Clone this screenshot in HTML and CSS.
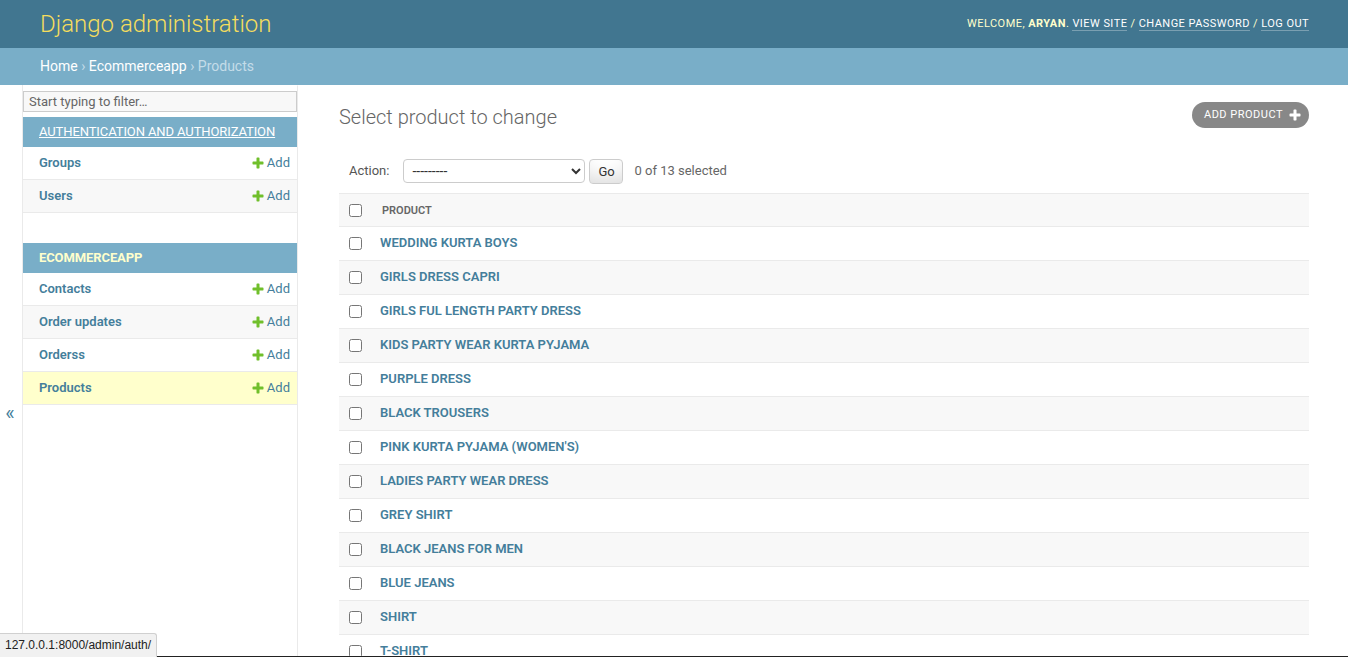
FILE: index.html
```html
<!DOCTYPE html>
<html lang="en">
<head>
<meta charset="utf-8">
<title>Select product to change | Django site admin</title>
<link rel="stylesheet" href="styles.css">
</head>
<body>
<header class="header">
  <div class="branding"><h1 class="site-name"><a href="#">Django administration</a></h1></div>
  <div class="user-tools">Welcome, <strong>aryan</strong>. <a href="#">View site</a> / <a href="#">Change password</a> / <a href="#">Log out</a></div>
</header>
<nav class="breadcrumbs"><a href="#">Home</a> › <a href="#">Ecommerceapp</a> › Products</nav>
<div class="main">
  <button class="toggle-nav" type="button"><span>«</span></button>
  <aside class="nav-sidebar">
    <input class="nav-filter" type="search" placeholder="Start typing to filter…">
    <div class="module">
      <div class="caption"><a class="section hovered" href="#">Authentication and Authorization</a></div>
      <div class="row"><a class="model" href="#">Groups</a><a class="addlink" href="#"><svg width="14" height="14" viewBox="0 0 1792 1792"><path fill="#70bf2b" d="M1600 796v192q0 40-28 68t-68 28h-416v416q0 40-28 68t-68 28h-192q-40 0-68-28t-28-68v-416h-416q-40 0-68-28t-28-68v-192q0-40 28-68t68-28h416v-416q0-40 28-68t68-28h192q40 0 68 28t28 68v416h416q40 0 68 28t28 68z"/></svg>Add</a></div>
      <div class="row alt"><a class="model" href="#">Users</a><a class="addlink" href="#"><svg width="14" height="14" viewBox="0 0 1792 1792"><path fill="#70bf2b" d="M1600 796v192q0 40-28 68t-68 28h-416v416q0 40-28 68t-68 28h-192q-40 0-68-28t-28-68v-416h-416q-40 0-68-28t-28-68v-192q0-40 28-68t68-28h416v-416q0-40 28-68t68-28h192q40 0 68 28t28 68v416h416q40 0 68 28t28 68z"/></svg>Add</a></div>
    </div>
    <div class="module">
      <div class="caption current-app"><a class="section" href="#">Ecommerceapp</a></div>
      <div class="row"><a class="model" href="#">Contacts</a><a class="addlink" href="#"><svg width="14" height="14" viewBox="0 0 1792 1792"><path fill="#70bf2b" d="M1600 796v192q0 40-28 68t-68 28h-416v416q0 40-28 68t-68 28h-192q-40 0-68-28t-28-68v-416h-416q-40 0-68-28t-28-68v-192q0-40 28-68t68-28h416v-416q0-40 28-68t68-28h192q40 0 68 28t28 68v416h416q40 0 68 28t28 68z"/></svg>Add</a></div>
      <div class="row alt"><a class="model" href="#">Order updates</a><a class="addlink" href="#"><svg width="14" height="14" viewBox="0 0 1792 1792"><path fill="#70bf2b" d="M1600 796v192q0 40-28 68t-68 28h-416v416q0 40-28 68t-68 28h-192q-40 0-68-28t-28-68v-416h-416q-40 0-68-28t-28-68v-192q0-40 28-68t68-28h416v-416q0-40 28-68t68-28h192q40 0 68 28t28 68v416h416q40 0 68 28t28 68z"/></svg>Add</a></div>
      <div class="row"><a class="model" href="#">Orderss</a><a class="addlink" href="#"><svg width="14" height="14" viewBox="0 0 1792 1792"><path fill="#70bf2b" d="M1600 796v192q0 40-28 68t-68 28h-416v416q0 40-28 68t-68 28h-192q-40 0-68-28t-28-68v-416h-416q-40 0-68-28t-28-68v-192q0-40 28-68t68-28h416v-416q0-40 28-68t68-28h192q40 0 68 28t28 68v416h416q40 0 68 28t28 68z"/></svg>Add</a></div>
      <div class="row current"><a class="model" href="#">Products</a><a class="addlink" href="#"><svg width="14" height="14" viewBox="0 0 1792 1792"><path fill="#70bf2b" d="M1600 796v192q0 40-28 68t-68 28h-416v416q0 40-28 68t-68 28h-192q-40 0-68-28t-28-68v-416h-416q-40 0-68-28t-28-68v-192q0-40 28-68t68-28h416v-416q0-40 28-68t68-28h192q40 0 68 28t28 68v416h416q40 0 68 28t28 68z"/></svg>Add</a></div>
    </div>
  </aside>
  <main class="content">
    <div class="title-row">
      <h1 class="title">Select product to change</h1>
      <a class="addbtn" href="#">Add product<svg width="14" height="14" viewBox="0 0 1792 1792"><path fill="#ffffff" d="M1600 796v192q0 40-28 68t-68 28h-416v416q0 40-28 68t-68 28h-192q-40 0-68-28t-28-68v-416h-416q-40 0-68-28t-28-68v-192q0-40 28-68t68-28h416v-416q0-40 28-68t68-28h192q40 0 68 28t28 68v416h416q40 0 68 28t28 68z"/></svg></a>
    </div>
    <div class="actions">
      <label class="action-label">Action:</label>
      <select class="action-select"><option>---------</option><option>Delete selected products</option></select>
      <button class="go" type="button">Go</button>
      <span class="counter">0 of 13 selected</span>
    </div>
    <table class="result-list">
      <thead>
        <tr><th class="cb"><input type="checkbox"></th><th class="col">Product</th></tr>
      </thead>
      <tbody>
        <tr><td class="cb"><input type="checkbox"></td><th class="name"><a href="#">WEDDING KURTA BOYS</a></th></tr>
        <tr class="alt"><td class="cb"><input type="checkbox"></td><th class="name"><a href="#">GIRLS DRESS CAPRI</a></th></tr>
        <tr><td class="cb"><input type="checkbox"></td><th class="name"><a href="#">GIRLS FUL LENGTH PARTY DRESS</a></th></tr>
        <tr class="alt"><td class="cb"><input type="checkbox"></td><th class="name"><a href="#">KIDS PARTY WEAR KURTA PYJAMA</a></th></tr>
        <tr><td class="cb"><input type="checkbox"></td><th class="name"><a href="#">PURPLE DRESS</a></th></tr>
        <tr class="alt"><td class="cb"><input type="checkbox"></td><th class="name"><a href="#">BLACK TROUSERS</a></th></tr>
        <tr><td class="cb"><input type="checkbox"></td><th class="name"><a href="#">PINK KURTA PYJAMA (WOMEN'S)</a></th></tr>
        <tr class="alt"><td class="cb"><input type="checkbox"></td><th class="name"><a href="#">LADIES PARTY WEAR DRESS</a></th></tr>
        <tr><td class="cb"><input type="checkbox"></td><th class="name"><a href="#">GREY SHIRT</a></th></tr>
        <tr class="alt"><td class="cb"><input type="checkbox"></td><th class="name"><a href="#">BLACK JEANS FOR MEN</a></th></tr>
        <tr><td class="cb"><input type="checkbox"></td><th class="name"><a href="#">BLUE JEANS</a></th></tr>
        <tr class="alt"><td class="cb"><input type="checkbox"></td><th class="name"><a href="#">SHIRT</a></th></tr>
        <tr><td class="cb"><input type="checkbox"></td><th class="name"><a href="#">T-SHIRT</a></th></tr>
      </tbody>
    </table>
    <p class="paginator">13 products</p>
  </main>
</div>
<div class="window-edge"></div>
<div class="status-bubble">127.0.0.1:8000/admin/auth/</div>
</body>
</html>
```

FILE: styles.css
```css
* { box-sizing: border-box; }
html { scrollbar-width: none; }
html::-webkit-scrollbar, body::-webkit-scrollbar { width: 0; height: 0; display: none; }
html, body { margin: 0; padding: 0; }
body {
  font-family: Roboto, "Liberation Sans", Arial, sans-serif;
  font-size: 14px;
  color: #333;
  background: #fff;
}
a { color: #447e9b; text-decoration: none; }

/* header */
.header {
  display: flex;
  justify-content: space-between;
  align-items: center;
  height: 48px;
  padding: 10px 40px;
  background: #417690;
  color: #ffc;
}
.site-name { margin: 0; font-size: 24px; font-weight: 300; line-height: 28px; }
.site-name a { color: #f5dd5d; }
.user-tools {
  font-size: 11px;
  line-height: 14px;
  letter-spacing: 0.45px;
  text-transform: uppercase;
  color: #ffc;
  margin-top: -1px;
  margin-right: -1px;
}
.user-tools strong { font-weight: 700; }
.user-tools a { color: #fff; border-bottom: 1px solid rgba(255, 255, 255, 0.3); }

.breadcrumbs {
  background: #79aec8;
  padding: 10px 40px;
  color: #c4dce8;
  font-size: 14px;
  line-height: 17px;
}
.breadcrumbs a { color: #fff; }

/* main layout */
.main { display: flex; }
.toggle-nav {
  flex: 0 0 23px;
  width: 23px;
  height: 100vh;
  align-self: flex-start;
  display: flex;
  align-items: center;
  justify-content: center;
  padding: 0;
  border: 0;
  border-right: 1px solid #eaeaea;
  background: #fff;
  color: #447e9b;
  font-family: Roboto, "Liberation Sans", sans-serif;
  font-size: 20px;
}
.toggle-nav span { margin-top: -2px; margin-left: -2px; }

.nav-sidebar {
  flex: 0 0 275px;
  width: 275px;
  border-top: 1px solid transparent;
  border-right: 1px solid #eaeaea;
}
.nav-filter {
  display: block;
  width: 100%;
  height: 21px;
  margin: 5px 0;
  padding: 2px 5px;
  border: 1px solid #ccc;
  background: #f8f8f8;
  font-family: Roboto, "Liberation Sans", sans-serif;
  font-size: 13px;
  color: #333;
  outline: none;
}
.nav-filter::placeholder { color: #666; }
.module { margin-bottom: 30px; }
.caption {
  background: #79aec8;
  padding: 8px 8px 8px 16px;
  font-size: 13px;
  line-height: 14px;
  letter-spacing: -0.1px;
  text-transform: uppercase;
  white-space: nowrap;
  overflow: hidden;
}
.caption a { color: #fff; }
.caption a.hovered { text-decoration: underline; }
.caption.current-app a { color: #ffc; font-weight: 700; }
.row {
  display: flex;
  justify-content: space-between;
  align-items: center;
  padding: 8px 7px 8px 16px;
  border-bottom: 1px solid #eaeaea;
  font-size: 13px;
  line-height: 16px;
}
.row.alt { background: #f8f8f8; }
.row.current { background: #ffc; }
.model { font-weight: 600; }
.addlink { display: inline-flex; align-items: center; }
.addlink svg { margin-right: 2px; }

/* content */
.content { flex: 1; min-width: 0; padding: 20px 39px 20px 41px; }
.title-row {
  display: flex;
  justify-content: space-between;
  align-items: flex-start;
  margin-bottom: 20px;
}
.title { margin: 0; font-size: 20px; font-weight: 300; line-height: 24px; color: #666; }
.addbtn {
  display: flex;
  align-items: center;
  margin-top: -3px;
  padding: 3px 7px 3px 12px;
  border-radius: 15px;
  background: #888;
  color: #fff;
  font-size: 11px;
  line-height: 20px;
  letter-spacing: 0.5px;
  text-transform: uppercase;
}
.addbtn svg { margin-left: 5px; }

.actions {
  display: flex;
  align-items: center;
  height: 44px;
  padding: 10px;
  font-size: 13px;
  line-height: 24px;
  color: #666;
}
.action-label { color: #555; }
.action-select {
  width: 182px;
  height: 24px;
  margin-left: 14px;
  padding: 0 0 0 4px;
  border: 1px solid #ccc;
  border-radius: 4px;
  background: #fff;
  color: #333;
  font-family: Roboto, "Liberation Sans", sans-serif;
  font-size: 14px;
}
.go {
  height: 25px;
  width: 34px;
  margin-left: 4px;
  padding: 4px 8px;
  border: 1px solid #ccc;
  border-radius: 4px;
  background: #fff;
  box-shadow: 0 -15px 20px -10px rgba(0, 0, 0, 0.15) inset;
  color: #333;
  font-family: Roboto, "Liberation Sans", sans-serif;
  font-size: 13px;
  line-height: 1;
}
.counter { margin-left: 11px; }

.result-list { width: 100%; border-collapse: collapse; }
.result-list thead th {
  background: #f8f8f8;
  border-top: 1px solid #eaeaea;
  border-bottom: 1px solid #eaeaea;
  padding: 9px 10px 7px;
  font-size: 11px;
  font-weight: 600;
  line-height: 16px;
  color: #666;
  text-transform: uppercase;
  text-align: left;
  vertical-align: middle;
}
.result-list td, .result-list tbody th {
  padding: 8px;
  border-bottom: 1px solid #eaeaea;
  font-size: 13px;
  line-height: 17px;
  text-align: left;
  vertical-align: middle;
}
.result-list .cb { width: 33px; padding: 8px 0 8px 10px; }
.result-list thead th.cb { padding: 8px 0 8px 10px; }
.result-list input[type="checkbox"] { display: block; margin: 0; width: 13px; height: 13px; }
.result-list tbody th.name { font-weight: 600; padding-top: 7px; padding-bottom: 9px; }
.result-list tr.alt { background: #f8f8f8; }
.paginator { margin: 0; padding: 10px 0; font-size: 13px; color: #666; }

/* browser chrome overlays */
.window-edge {
  position: fixed;
  left: 0;
  right: 0;
  bottom: 0;
  height: 1px;
  background: #222;
}
.status-bubble {
  position: fixed;
  left: 0;
  bottom: 0;
  width: 157px;
  height: 24px;
  padding: 0 4px 0 5px;
  background: #f1f1f1;
  border-top: 1px solid #d0d0d0;
  border-right: 1px solid #d0d0d0;
  border-top-right-radius: 3px;
  font-family: "Liberation Sans", Arial, sans-serif;
  font-size: 12px;
  line-height: 23px;
  color: #222;
  white-space: nowrap;
}
```
